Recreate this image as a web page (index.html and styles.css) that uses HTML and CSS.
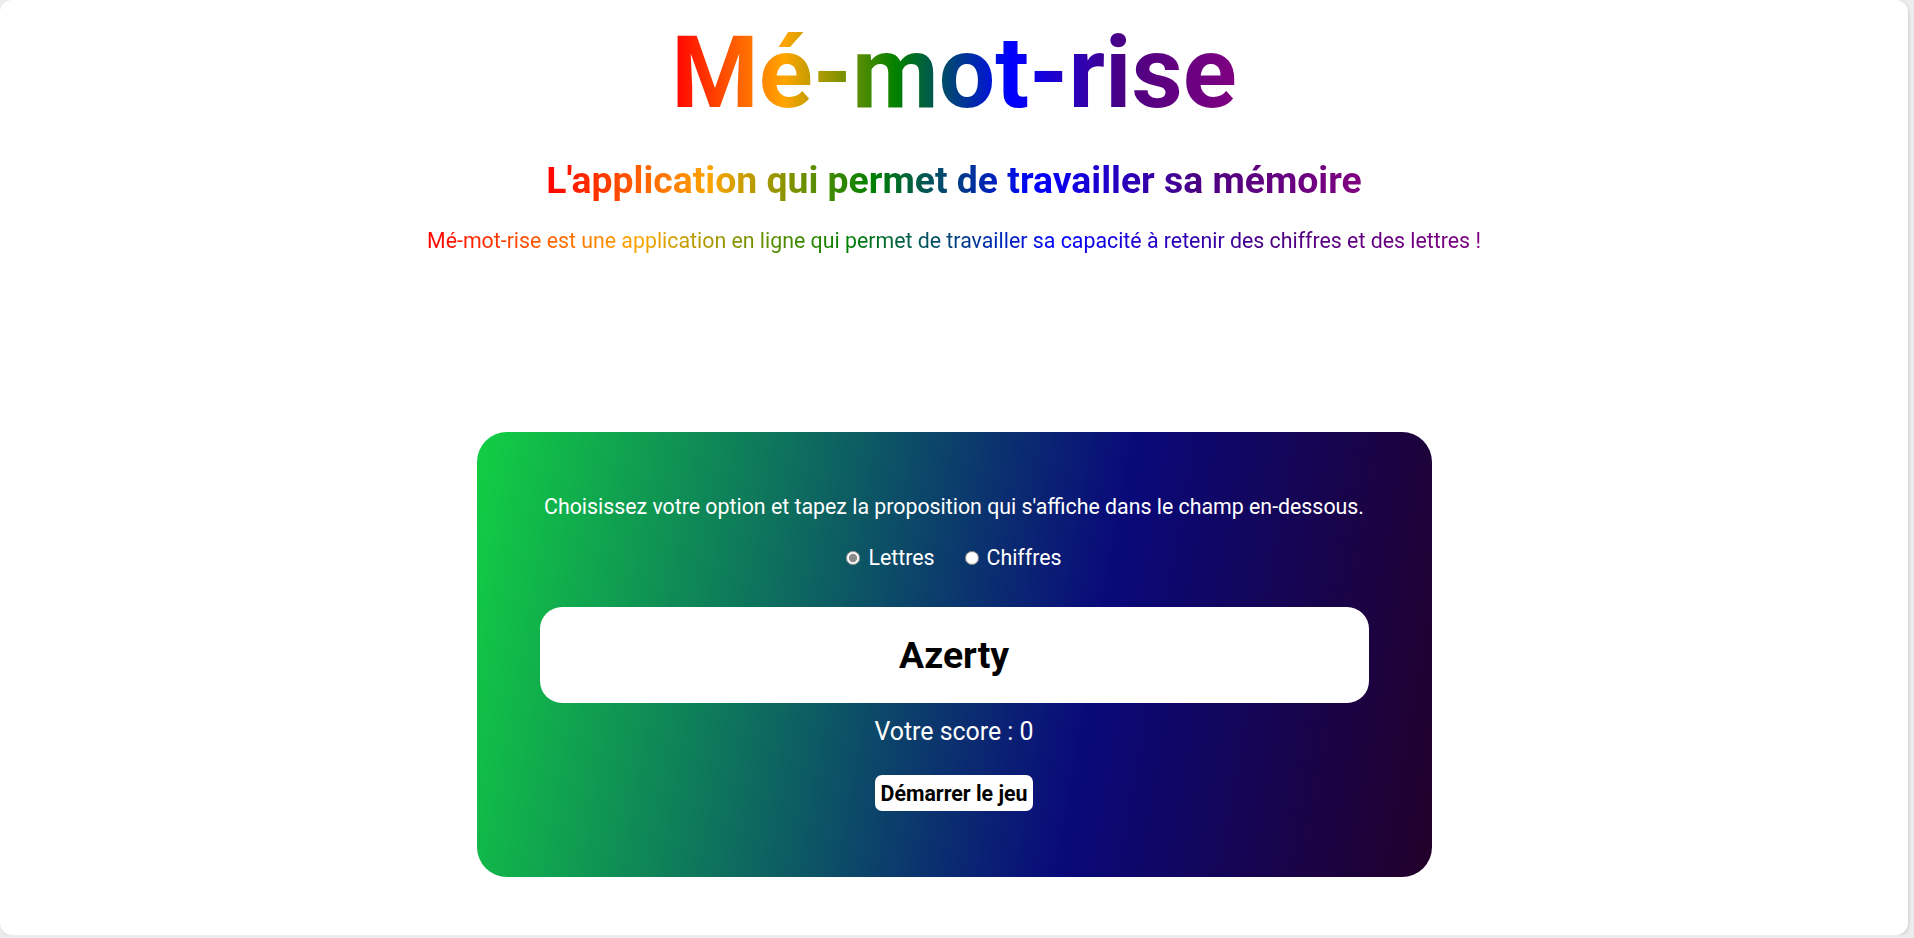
FILE: index.html
```html
<!DOCTYPE html>
<html lang="fr">
<head>
<meta charset="utf-8">
<title>Mé-mot-rise</title>
<link rel="stylesheet" href="styles.css">
</head>
<body>
<div class="page">
  <header class="header">
    <h1 class="title rainbow">Mé-mot-rise</h1>
    <h2 class="subtitle rainbow">L'application qui permet de travailler sa mémoire</h2>
    <p class="intro rainbow">Mé-mot-rise est une application en ligne qui permet de travailler sa capacité à retenir des chiffres et des lettres !</p>
  </header>
  <main class="game">
    <p class="instructions">Choisissez votre option et tapez la proposition qui s'affiche dans le champ en-dessous.</p>
    <div class="options">
      <label class="option"><input type="radio" name="mode" checked>Lettres</label>
      <label class="option"><input type="radio" name="mode">Chiffres</label>
    </div>
    <div class="display">Azerty</div>
    <p class="score">Votre score : 0</p>
    <button class="start" type="button">Démarrer le jeu</button>
  </main>
</div>
</body>
</html>
```

FILE: styles.css
```css
html, body {
  margin: 0;
  padding: 0;
  background: #ececec;
}

body {
  font-family: Roboto, "Liberation Sans", Arial, sans-serif;
}

.page {
  box-sizing: border-box;
  width: calc(100% - 6px);
  height: 935px;
  background: #ffffff;
  border-radius: 12px;
  box-shadow: 1px 1px 3px rgba(0, 0, 0, 0.12);
  display: flex;
  flex-direction: column;
  align-items: center;
  overflow: hidden;
}

.header {
  display: flex;
  flex-direction: column;
  align-items: center;
}

.rainbow {
  background: linear-gradient(to right, #ff0000 0%, #ffa500 20%, #008000 40%, #0000ff 60%, #4b0082 80%, #800080 100%);
  -webkit-background-clip: text;
  background-clip: text;
  color: transparent;
  -webkit-text-fill-color: transparent;
}

.title {
  margin: 14px 0 0;
  font-size: 100px;
  font-weight: 700;
  line-height: normal;
}

.subtitle {
  margin: 27px 0 0;
  font-size: 37.33px;
  font-weight: 700;
  line-height: normal;
}

.intro {
  margin: 26px 0 0;
  font-size: 21.33px;
  font-weight: 400;
  line-height: normal;
}

.game {
  box-sizing: border-box;
  width: 955px;
  height: 445px;
  margin-top: 179px;
  padding: 62px 63px 0;
  border-radius: 30px;
  background: linear-gradient(100deg, #12cf43 0%, #09097a 64%, #23002a 100%);
  color: #ffffff;
  display: flex;
  flex-direction: column;
  align-items: center;
}

.instructions {
  margin: 0;
  font-size: 21.33px;
  line-height: normal;
}

.options {
  margin-top: 26px;
  display: flex;
  gap: 30px;
  font-size: 21.33px;
  line-height: normal;
}

.option {
  display: flex;
  align-items: center;
  gap: 8px;
}

.option input {
  margin: 0;
  width: 14px;
  height: 14px;
  accent-color: #8a8a8a;
}

.display {
  box-sizing: border-box;
  margin-top: 37px;
  width: 100%;
  height: 96px;
  border-radius: 22px;
  background: #ffffff;
  color: #000000;
  font-size: 37.33px;
  font-weight: 700;
  display: flex;
  align-items: center;
  justify-content: center;
}

.score {
  margin: 14px 0 0;
  font-size: 24.9px;
  line-height: normal;
}

.start {
  margin-top: 29px;
  height: 36px;
  padding: 0 6px;
  border: none;
  border-radius: 7px;
  background: #ffffff;
  color: #000000;
  font-family: Roboto, "Liberation Sans", Arial, sans-serif;
  font-size: 21.33px;
  font-weight: 700;
}
```
